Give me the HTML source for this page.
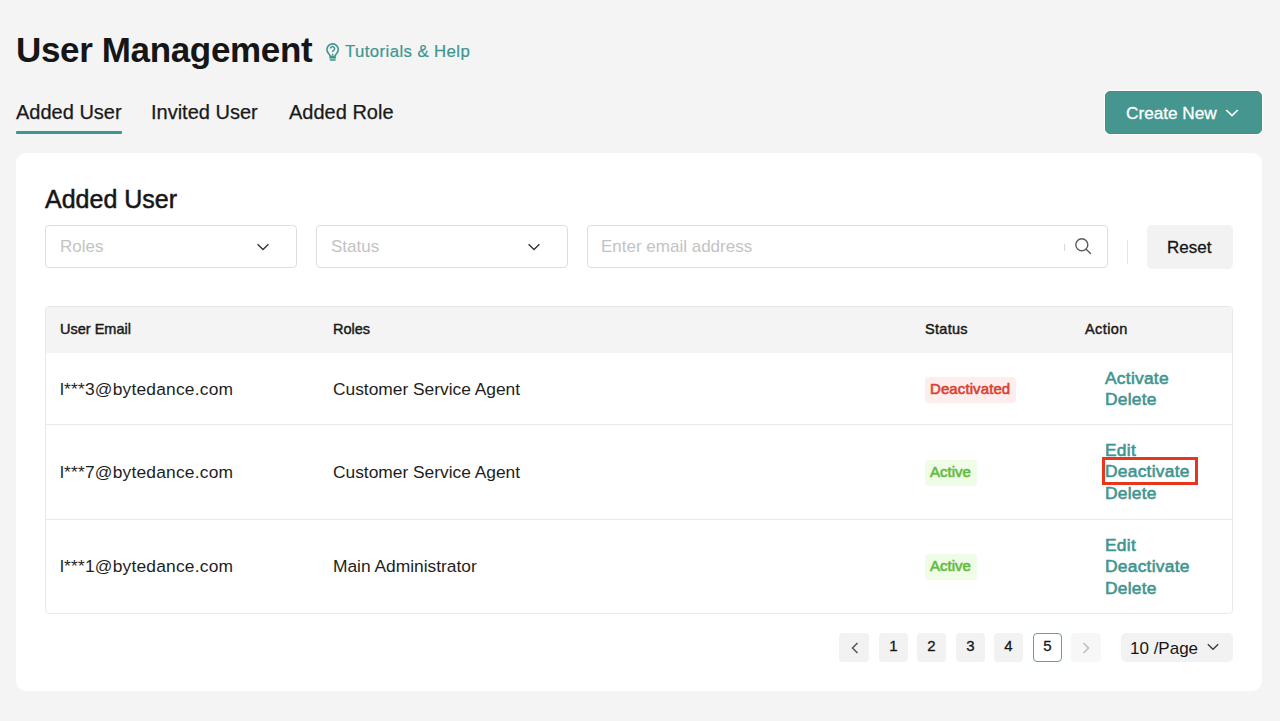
<!DOCTYPE html>
<html><head><meta charset="utf-8">
<style>
*{box-sizing:border-box;margin:0;padding:0}
html,body{width:1280px;height:721px;overflow:hidden;background:#f4f4f4;font-family:"Liberation Sans",sans-serif;color:#1a1a1a}
.abs{position:absolute;white-space:nowrap}
.title{left:16px;top:29.5px;letter-spacing:-0.35px;font-size:35px;font-weight:bold;color:#161616;line-height:40px}
.help{left:345px;top:42px;font-size:16.8px;letter-spacing:0.4px;color:#3f9590;line-height:20px;-webkit-text-stroke:0.2px #3f9590}
.tab{top:100px;font-size:20px;color:#1a1a1a;line-height:24px;-webkit-text-stroke:0.25px #1a1a1a}
.uline{left:16px;top:131px;width:106px;height:3px;background:#3f9590;border-radius:1px}
.btn{left:1105px;top:91px;width:157px;height:43px;background:#45968f;border:1px solid #3d918a;box-shadow:0 0 0 1px #fff;border-radius:5px;color:#fff;font-size:17.2px;-webkit-text-stroke:0.3px #fff}
.card{left:16px;top:153px;width:1246px;height:538px;background:#fff;border-radius:10px}
.h2{left:45px;top:185px;font-size:25px;color:#161616;line-height:28px;-webkit-text-stroke:0.5px #161616}
.inp{top:225px;height:43px;border:1px solid #dedede;border-radius:4px;background:#fff}
.ph{font-size:17px;color:#c3c3c3;line-height:20px}
.reset{left:1147px;top:225px;width:86px;height:44px;background:#f2f2f2;border-radius:5px;font-size:17px;color:#161616;-webkit-text-stroke:0.3px #161616}
.table{left:45px;top:306px;width:1188px;height:308px;border:1px solid #e9e9e9;border-radius:4px;overflow:hidden;background:#fff}
.thead{left:0;top:0;width:1186px;height:46px;background:#f4f4f4}
.th{font-size:14.5px;color:#1a1a1a;line-height:18px;-webkit-text-stroke:0.45px #1a1a1a}
.td{font-size:17.4px;letter-spacing:0.2px;color:#1e1e1e;line-height:20px}
.row{left:0;width:1186px;height:1px;background:#e9e9e9}
.act{font-size:17.4px;letter-spacing:0.25px;color:#3f9590;line-height:21.7px;-webkit-text-stroke:0.6px #3f9590}
.tag{height:26px;border-radius:4px;font-size:15px;line-height:24.5px;padding:0 5px}
.pg{top:633px;width:29px;height:29px;background:#f2f2f2;border-radius:4px;font-size:15px;text-align:center;line-height:26.5px;color:#161616;-webkit-text-stroke:0.3px #161616}
</style></head><body>
<div class="abs title">User Management</div>
<svg class="abs" style="left:326px;top:43px" width="14" height="18" viewBox="0 0 14 18" fill="none" stroke="#3f9590">
  <path d="M4.2 13.4 C3.9 11.9 3.2 11.3 2.4 10.3 C1.5 9.2 0.9 8.1 0.9 6.6 A5.7 5.7 0 0 1 12.3 6.6 C12.3 8.1 11.7 9.2 10.8 10.3 C10 11.3 9.3 11.9 9 13.4 Z" stroke-width="1.6" stroke-linejoin="round"/>
  <path d="M4.4 5.6 A2.1 2.1 0 1 1 7.6 7.4 C6.9 7.8 6.6 8.2 6.6 9.0" stroke-width="1.5"/>
  <circle cx="6.6" cy="11.4" r="0.8" fill="#3f9590" stroke="none"/>
  <rect x="3.3" y="14" width="6.8" height="1.6" fill="#3f9590" stroke="none"/>
  <rect x="3.5" y="15.6" width="6.4" height="0.7" fill="#8fc3bf" stroke="none"/>
  <rect x="3.8" y="16.2" width="5.8" height="1.5" rx="0.5" fill="#3f9590" stroke="none"/>
</svg>
<div class="abs help">Tutorials &amp; Help</div>

<div class="abs tab" style="left:16px">Added User</div>
<div class="abs tab" style="left:151px">Invited User</div>
<div class="abs tab" style="left:289px">Added Role</div>
<div class="abs uline"></div>

<div class="abs btn"><span class="abs" style="left:20px;top:11px;line-height:20px">Create New</span>
<svg class="abs" style="left:119px;top:17px" width="14" height="8" viewBox="0 0 14 8" fill="none" stroke="#fff" stroke-width="1.6"><path d="M1.2 1 L7 6.6 L12.8 1"/></svg>
</div>

<div class="abs card"></div>
<div class="abs h2">Added User</div>

<div class="abs inp" style="left:45px;width:252px"><span class="abs ph" style="left:14px;top:11px">Roles</span>
<svg class="abs" style="left:210px;top:17px" width="14" height="8" viewBox="0 0 14 8" fill="none" stroke="#333" stroke-width="1.4"><path d="M1.6 1.3 L7 6.5 L12.4 1.3"/></svg></div>
<div class="abs inp" style="left:316px;width:252px"><span class="abs ph" style="left:14px;top:11px">Status</span>
<svg class="abs" style="left:210px;top:17px" width="14" height="8" viewBox="0 0 14 8" fill="none" stroke="#333" stroke-width="1.4"><path d="M1.6 1.3 L7 6.5 L12.4 1.3"/></svg></div>
<div class="abs inp" style="left:587px;width:521px"><span class="abs ph" style="left:13px;top:11px">Enter email address</span>
<div class="abs" style="left:476px;top:18px;width:1px;height:7px;background:#d8d8d8"></div>
<svg class="abs" style="left:486px;top:11px" width="18" height="18" viewBox="0 0 18 18" fill="none" stroke="#5c5c5c" stroke-width="1.4"><circle cx="7.8" cy="7.8" r="6"/><path d="M12.2 12.2 L16.5 16.5" stroke-linecap="round"/></svg>
</div>
<div class="abs" style="left:1127px;top:240px;width:1px;height:24px;background:#e3e3e3"></div>
<div class="abs reset"><span class="abs" style="left:20px;top:13px;line-height:20px">Reset</span></div>

<div class="abs table">
  <div class="abs thead">
    <span class="abs th" style="left:14px;top:13px">User Email</span>
    <span class="abs th" style="left:287px;top:13px">Roles</span>
    <span class="abs th" style="left:879px;top:13px;letter-spacing:0.3px">Status</span>
    <span class="abs th" style="left:1039px;top:13px;letter-spacing:0.4px">Action</span>
  </div>
  <div class="abs row" style="top:117px"></div>
  <div class="abs row" style="top:212px"></div>

  <span class="abs td" style="left:14px;top:72px">l***3@bytedance.com</span>
  <span class="abs td" style="left:287px;top:72px;letter-spacing:-0.02px">Customer Service Agent</span>
  <span class="abs tag" style="left:879px;top:70px;width:91px;letter-spacing:0.1px;background:#fdeeed;color:#d9412f;-webkit-text-stroke:0.6px #d9412f">Deactivated</span>
  <div class="abs act" style="left:1059px;top:60.5px">Activate<br>Delete</div>

  <span class="abs td" style="left:14px;top:155px">l***7@bytedance.com</span>
  <span class="abs td" style="left:287px;top:155px;letter-spacing:-0.02px">Customer Service Agent</span>
  <span class="abs tag" style="left:879px;top:153px;width:52px;background:#effce6;color:#62bb3c;-webkit-text-stroke:0.6px #62bb3c">Active</span>
  <div class="abs act" style="left:1059px;top:132.5px">Edit<br>Deactivate<br>Delete</div>

  <span class="abs td" style="left:14px;top:249px">l***1@bytedance.com</span>
  <span class="abs td" style="left:287px;top:249px;letter-spacing:-0.02px">Main Administrator</span>
  <span class="abs tag" style="left:879px;top:247px;width:52px;background:#effce6;color:#62bb3c;-webkit-text-stroke:0.6px #62bb3c">Active</span>
  <div class="abs act" style="left:1059px;top:227.5px">Edit<br>Deactivate<br>Delete</div>
</div>
<div class="abs" style="left:1102px;top:457px;width:96px;height:28px;border:3px solid #e4371c"></div>

<div class="abs pg" style="left:839px;width:30px">
<svg class="abs" style="left:12px;top:9px" width="8" height="12" viewBox="0 0 8 12" fill="none" stroke="#555" stroke-width="1.5"><path d="M6.5 1 L1.5 6 L6.5 11"/></svg></div>
<div class="abs pg" style="left:879px">1</div>
<div class="abs pg" style="left:917px">2</div>
<div class="abs pg" style="left:956px">3</div>
<div class="abs pg" style="left:994px">4</div>
<div class="abs pg" style="left:1033px;background:#fff;border:1px solid #5aa5a0;line-height:24.5px">5</div>
<div class="abs pg" style="left:1071px;width:30px;background:#f7f7f7">
<svg class="abs" style="left:11px;top:9px" width="8" height="12" viewBox="0 0 8 12" fill="none" stroke="#bbb" stroke-width="1.5"><path d="M1.5 1 L6.5 6 L1.5 11"/></svg></div>
<div class="abs" style="left:1121px;top:633px;width:112px;height:29px;background:#f2f2f2;border-radius:5px">
<span class="abs" style="left:9px;top:6px;font-size:17px;line-height:20px;color:#161616">10 /Page</span>
<svg class="abs" style="left:85px;top:10px" width="14" height="8" viewBox="0 0 14 8" fill="none" stroke="#3a3a3a" stroke-width="1.3"><path d="M1.8 1.2 L7 6.3 L12.2 1.2"/></svg>
</div>
</body></html>
